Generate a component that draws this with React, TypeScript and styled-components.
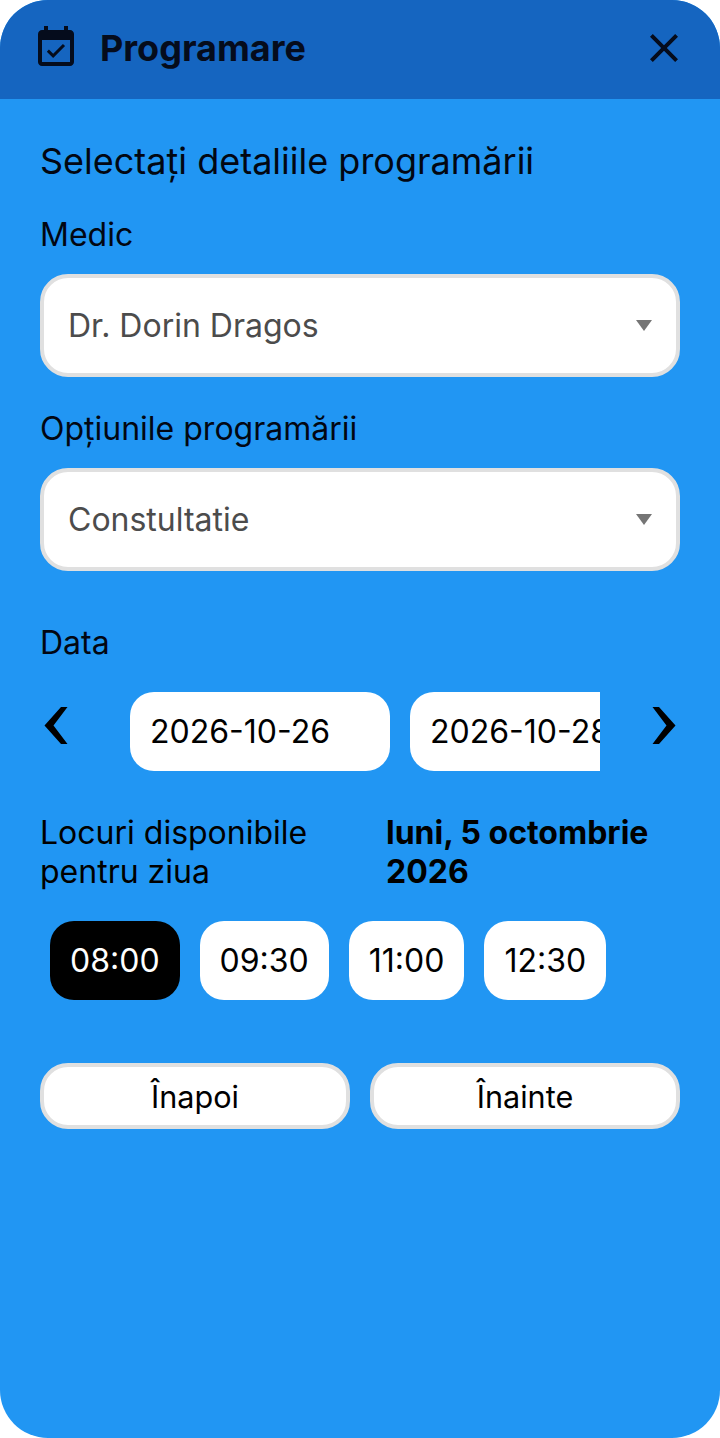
import React from "react";
import styled, { createGlobalStyle } from "styled-components";

const Global = createGlobalStyle`
  html, body { margin: 0; padding: 0; background: #fff; }
  #root { width: 720px; }
  * { box-sizing: border-box; }
`;

const Sheet = styled.div`
  width: 720px;
  height: 1438px;
  background: #2196f3;
  border-radius: 48px;
  overflow: hidden;
  font-family: Inter, "Liberation Sans", sans-serif;
  color: #000;
`;

const Header = styled.header`
  height: 99px;
  background: #1565c0;
  display: flex;
  align-items: center;
  padding: 0 32px 3px;
  color: #050c1c;
`;

const Title = styled.h1`
  flex: 1;
  margin: 0 0 0 20px;
  font-size: 36px;
  font-weight: 700;
  line-height: 40px;
`;

const Content = styled.main`
  padding: 42px 40px 0;
  display: flex;
  flex-direction: column;
`;

const Heading = styled.h2`
  margin: 0;
  font-size: 36px;
  font-weight: 400;
  line-height: 40px;
  color: #020712;
`;

const Label = styled.label<{ $top: number }>`
  display: block;
  margin-top: ${(p) => p.$top}px;
  font-size: 32px;
  line-height: 40px;
  color: #020712;
`;

const Select = styled.div`
  margin-top: 19px;
  height: 103px;
  background: #fff;
  border: 4px solid #e0e0e0;
  border-radius: 28px;
  padding: 0 24px;
  display: flex;
  align-items: center;
  justify-content: space-between;
  font-size: 32px;
  color: #4c4c4c;
`;

const Caret = styled.span`
  width: 0;
  height: 0;
  border-left: 8px solid transparent;
  border-right: 8px solid transparent;
  border-top: 11px solid #757575;
`;

const DateRow = styled.div`
  margin-top: 29px;
  display: grid;
  grid-template-columns: 90px 470px 80px;
  align-items: center;
`;

const Arrow = styled.svg<{ $side: "left" | "right" }>`
  display: block;
  width: 24px;
  height: 38px;
  justify-self: ${(p) => (p.$side === "left" ? "start" : "end")};
  margin: 0 4px;
  position: relative;
  top: -6px;
`;

const Scroller = styled.div`
  display: flex;
  gap: 20px;
  overflow: hidden;
`;

const DateCard = styled.div`
  flex: none;
  width: 260px;
  height: 79px;
  background: #fff;
  border-radius: 24px;
  padding: 0 20px;
  display: flex;
  align-items: center;
  font-size: 32px;
`;

const Slots = styled.div`
  margin-top: 42px;
  display: grid;
  grid-template-columns: 346px 1fr;
  font-size: 32px;
  line-height: 39px;
`;

const Day = styled.strong`
  font-weight: 700;
`;

const Times = styled.div`
  margin: 30px 0 0 10px;
  display: flex;
  gap: 20px;
`;

const Time = styled.div<{ $on?: boolean }>`
  height: 79px;
  padding: 0 20px;
  border-radius: 24px;
  display: flex;
  align-items: center;
  font-size: 32px;
  background: ${(p) => (p.$on ? "#000" : "#fff")};
  color: ${(p) => (p.$on ? "#fff" : "#000")};
`;

const Actions = styled.div`
  margin-top: 63px;
  display: flex;
  gap: 20px;
`;

const Action = styled.button`
  flex: 1;
  height: 66px;
  background: #fff;
  border: 4px solid #e0e0e0;
  border-radius: 28px;
  font: 400 30.6px Inter, "Liberation Sans", sans-serif;
  color: #000;
`;

const EventIcon = () => (
  <svg width="48" height="48" viewBox="0 0 24 24" fill="currentColor">
    <path d="M16.53 11.06 15.47 10l-4.88 4.88-2.12-2.12-1.06 1.06L10.59 17l5.94-5.94zM19 3h-1V1h-2v2H8V1H6v2H5c-1.11 0-1.99.9-1.99 2L3 19c0 1.1.89 2 2 2h14c1.1 0 2-.9 2-2V5c0-1.1-.9-2-2-2zm0 16H5V8h14v11z" />
  </svg>
);

const CloseIcon = () => (
  <svg width="48" height="48" viewBox="0 0 24 24" fill="#050c1c">
    <path d="M19 6.41 17.59 5 12 10.59 6.41 5 5 6.41 10.59 12 5 17.59 6.41 19 12 13.41 17.59 19 19 17.59 13.41 12z" />
  </svg>
);

export default function App() {
  return (
    <>
      <Global />
      <Sheet>
        <Header>
          <EventIcon />
          <Title>Programare</Title>
          <CloseIcon />
        </Header>
        <Content>
          <Heading>Selectați detaliile programării</Heading>
          <Label $top={34}>Medic</Label>
          <Select>
            Dr. Dorin Dragos
            <Caret />
          </Select>
          <Label $top={32}>Opțiunile programării</Label>
          <Select>
            Constultatie
            <Caret />
          </Select>
          <Label $top={52}>Data</Label>
          <DateRow>
            <Arrow $side="left" viewBox="0 0 24 38">
              <path d="M17 0h6.5L9.5 18.5 23.5 37H17L.5 18.5z" />
            </Arrow>
            <Scroller>
              <DateCard>2026-10-26</DateCard>
              <DateCard>2026-10-28</DateCard>
            </Scroller>
            <Arrow $side="right" viewBox="0 0 24 38">
              <path d="M7 0H.5l14 18.5L.5 37H7l16.5-18.5z" />
            </Arrow>
          </DateRow>
          <Slots>
            <span>Locuri disponibile pentru ziua</span>
            <Day>luni, 5 octombrie 2026</Day>
          </Slots>
          <Times>
            <Time $on>08:00</Time>
            <Time>09:30</Time>
            <Time>11:00</Time>
            <Time>12:30</Time>
          </Times>
          <Actions>
            <Action>Înapoi</Action>
            <Action>Înainte</Action>
          </Actions>
        </Content>
      </Sheet>
    </>
  );
}
